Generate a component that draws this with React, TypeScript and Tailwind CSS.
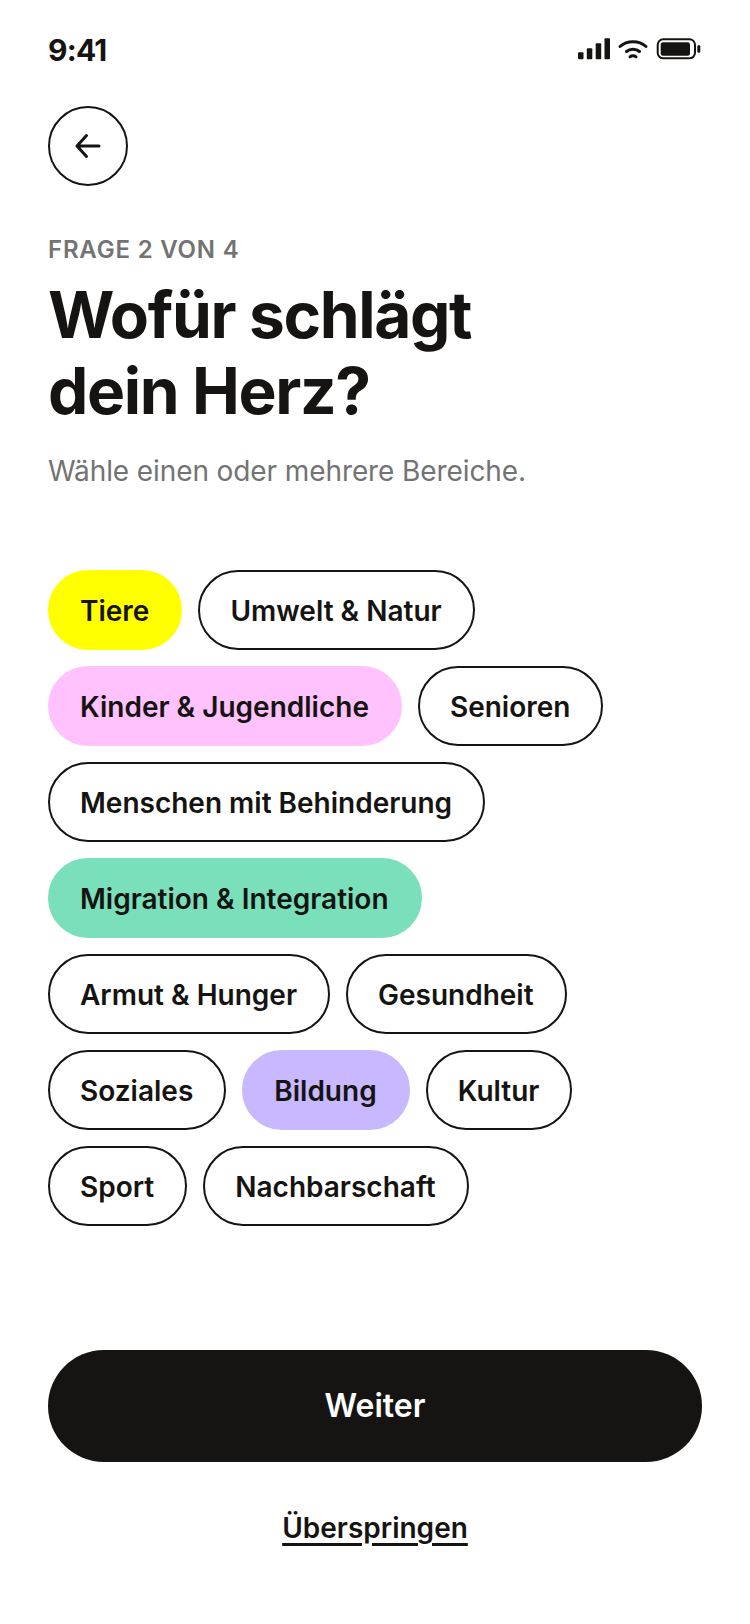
import React from "react";

const chips: { t: string; c?: string }[][] = [
  [{ t: "Tiere", c: "bg-[#ffff00] border-[#ffff00]" }, { t: "Umwelt & Natur" }],
  [{ t: "Kinder & Jugendliche", c: "bg-[#ffc2fc] border-[#ffc2fc]" }, { t: "Senioren" }],
  [{ t: "Menschen mit Behinderung" }],
  [{ t: "Migration & Integration", c: "bg-[#7ae0bb] border-[#7ae0bb]" }],
  [{ t: "Armut & Hunger" }, { t: "Gesundheit" }],
  [{ t: "Soziales" }, { t: "Bildung", c: "bg-[#c7b8ff] border-[#c7b8ff]" }, { t: "Kultur" }],
  [{ t: "Sport" }, { t: "Nachbarschaft" }],
];

export default function App() {
  return (
    <div className="w-[750px] h-[1624px] bg-white text-[#151412] flex flex-col px-[48px] font-['Inter','Liberation_Sans',sans-serif] overflow-hidden">
      <div className="h-[106px] flex items-start justify-between pt-[32px] shrink-0">
        <span className="text-[30px] leading-[36px] font-bold tracking-[-0.8px]">9:41</span>
        <svg width="124" height="22" viewBox="0 0 124 22" className="mt-[6px]" fill="#151412">
          <rect x="0" y="14.3" width="5.5" height="7" rx="1" />
          <rect x="8.8" y="10.3" width="5.5" height="11" rx="1" />
          <rect x="17.7" y="5.3" width="5.5" height="16" rx="1" />
          <rect x="26.5" y="0.3" width="5.5" height="21" rx="1" />
          <path d="M42 8.5C49 2 61 2 68 8.5" fill="none" stroke="#151412" strokeWidth="3" strokeLinecap="round" />
          <path d="M48.5 13.5C52 10.5 58 10.5 61.5 13.5" fill="none" stroke="#151412" strokeWidth="3" strokeLinecap="round" />
          <path d="M52 18.8C53.5 17.5 56.5 17.5 58 18.8" fill="none" stroke="#151412" strokeWidth="3" strokeLinecap="round" />
          <rect x="79.7" y="1.3" width="37.3" height="19" rx="5.5" fill="none" stroke="#151412" strokeWidth="2" />
          <rect x="82.7" y="4.3" width="29.3" height="13.4" rx="2.5" />
          <rect x="119.3" y="7" width="3" height="7.7" rx="1.5" />
        </svg>
      </div>
      <button className="w-[80px] h-[80px] rounded-full border-2 border-[#151412] flex items-center justify-center shrink-0">
        <svg width="28" height="28" viewBox="0 0 28 28" fill="none" stroke="#151412" strokeWidth="3" strokeLinecap="round" strokeLinejoin="round">
          <path d="M25 14H3.5M12.5 3.5L3 14L12.5 24.5" />
        </svg>
      </button>
      <div className="mt-[48px] text-[24px] leading-[32px] font-semibold tracking-[0.8px] text-[#737373]">FRAGE 2 VON 4</div>
      <h1 className="mt-[11px] text-[64px] leading-[76px] font-bold tracking-[-1.35px]">Wofür schlägt<br />dein Herz?</h1>
      <p className="mt-[22px] text-[28px] leading-[40px] tracking-[-0.1px] text-[#737373]">Wähle einen oder mehrere Bereiche.</p>
      <div className="mt-[79px] flex flex-col gap-[16px]">
        {chips.map((row, i) => (
          <div key={i} className="flex gap-[16px]">
            {row.map((c) => (
              <div key={c.t} className={`h-[80px] rounded-full border-2 pl-[30px] pr-[31px] pt-[2px] flex items-center text-[28px] font-semibold ${c.c ?? "border-[#151412]"}`}>{c.t}</div>
            ))}
          </div>
        ))}
      </div>
      <button className="mt-[124px] h-[112px] w-[654px] rounded-full bg-[#151412] text-white text-[32px] font-semibold shrink-0">Weiter</button>
      <div className="mt-[46px] text-center text-[28px] leading-[40px] font-semibold underline underline-offset-[5px] decoration-[3px]">Überspringen</div>
    </div>
  );
}
